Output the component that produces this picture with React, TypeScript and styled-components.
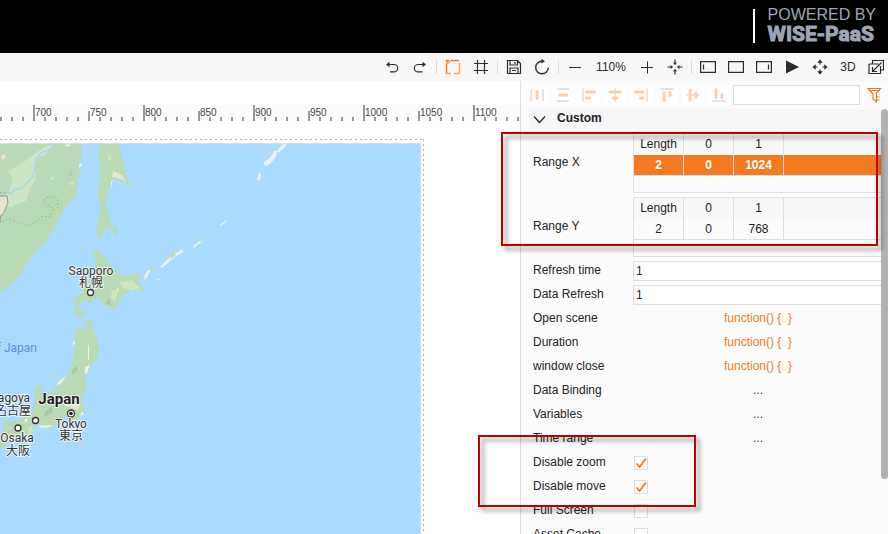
import React from "react";
import styled, { createGlobalStyle, css } from "styled-components";

const ORANGE = "#f37a20";
const LINE = "#dedede";
const INK = "#2b2b2b";

const GlobalStyle = createGlobalStyle`
  *, *::before, *::after { box-sizing: border-box; }
  body {
    margin: 0;
    background: #fff;
    color: #222;
    font: 12px/20px "Liberation Sans", Arial, sans-serif;
  }
  button, input { font: inherit; color: inherit; }
`;

const Page = styled.div`
  display: flex;
  flex-direction: column;
  height: 100vh;
  overflow: hidden;
`;

/* ---------- brand header ---------- */

const Header = styled.header`
  display: flex;
  flex: none;
  justify-content: flex-end;
  height: 53px;
  padding: 9px 12px 10px;
  background: #000;
`;

const Brand = styled.div`
  display: flex;
  flex-direction: column;
  padding-left: 13px;
  border-left: 2px solid #fff;
  color: #9fa5b5;
  white-space: nowrap;
`;

const BrandSmall = styled.span`
  font-size: 16px;
  line-height: 12px;
`;

const BrandName = styled.strong`
  font: bold 21px/26px Roboto, "Liberation Sans", sans-serif;
  -webkit-text-stroke: 1px #9fa5b5;
`;

/* ---------- toolbar ---------- */

const Toolbar = styled.div`
  display: flex;
  flex: none;
  align-items: center;
  justify-content: flex-end;
  height: 28px;
  margin-right: -2px;
  background: #f7f7f7;
`;

const ToolButton = styled.button<{ $wide?: boolean }>`
  display: flex;
  flex: none;
  align-items: center;
  justify-content: center;
  width: ${(p) => (p.$wide ? 44 : 28)}px;
  height: 28px;
  padding: 0;
  border: 0;
  background: none;
  color: ${INK};
`;

const Separator = styled.span`
  flex: none;
  width: 1px;
  height: 14px;
  margin: 0 2px;
  background: #dcdcdc;
`;

const Body = styled.main`
  display: flex;
  flex: 1;
  min-height: 0;
`;

/* ---------- canvas ---------- */

const Stage = styled.section`
  display: flex;
  flex: 1;
  flex-direction: column;
  min-width: 0;
  padding-top: 24px;
  overflow: hidden;
`;

const Ruler = styled.div`
  display: flex;
  flex: none;
  height: 16px;
  margin-left: -22px;
  overflow: hidden;
  background: #fcfcfc;
`;

const RulerCell = styled.span<{ $major: boolean }>`
  flex: none;
  width: 55px;
  padding-left: 2px;
  font-size: 10px;
  line-height: 15px;
  color: #444;
  background:
    linear-gradient(#999, #999) 0 100% / 2px ${(p) => (p.$major ? 16 : 10)}px no-repeat,
    repeating-linear-gradient(90deg, #999 0 2px, transparent 2px 11px) 0 100% / 100% 4px no-repeat;
`;

const Frame = styled.div`
  flex: 1;
  min-height: 0;
  margin: 18px 96px 0 0;
  padding: 4px 3px 0 0;
  background:
    repeating-linear-gradient(90deg, #8fbde6 0 2px, transparent 2px 5px) 0 0 / 100% 1px no-repeat,
    repeating-linear-gradient(#8fbde6 0 2px, transparent 2px 5px) 100% 0 / 1px 100% no-repeat;
`;

const MapSvg = styled.svg`
  display: block;
  width: 100%;
  height: 100%;
  border-top: 1px solid #d3dde2;
  border-right: 1px solid #d3dde2;
  background: #aadaff;
`;

const MapLabel = styled.text<{ $kind?: "country" | "sea" }>`
  font-family: Roboto, "Noto Sans CJK JP", sans-serif;
  font-size: 12px;
  fill: #333;
  stroke: rgba(255, 255, 255, 0.75);
  stroke-width: 2px;
  stroke-linejoin: round;
  paint-order: stroke;
  ${(p) => p.$kind === "country" && css`font-size: 15px; font-weight: 700; fill: #222;`}
  ${(p) => p.$kind === "sea" && css`fill: #5b8fd6; stroke: none;`}
`;

/* ---------- property panel ---------- */

const Panel = styled.aside`
  position: relative;
  display: flex;
  flex: none;
  flex-direction: column;
  width: 368px;
  border-left: 1px solid ${LINE};
  background: #fcfcfc;
`;

const AlignBar = styled.div`
  display: flex;
  flex: none;
  align-items: center;
  height: 28px;
  padding-left: 3px;
`;

const AlignButton = styled.button`
  display: flex;
  flex: none;
  align-items: center;
  justify-content: center;
  width: 22px;
  height: 20px;
  margin: 0 2px;
  padding: 0;
  border: 0;
  background: #fff;
`;

const SearchInput = styled.input`
  flex: 1;
  min-width: 0;
  height: 20px;
  margin-left: 1px;
  padding: 0 4px;
  border: 1px solid ${LINE};
  background: #fff;
  outline: none;
`;

const FilterButton = styled(ToolButton)`
  color: ${ORANGE};
`;

const Scroller = styled.div`
  display: flex;
  flex: 1;
  min-height: 0;
`;

const Content = styled.div`
  flex: 1;
  min-width: 0;
  padding-left: 8px;
  overflow: hidden;
`;

const ScrollTrack = styled.div`
  flex: none;
  width: 7px;
`;

const ScrollThumb = styled.div`
  height: 87%;
  border-radius: 4px;
  background: #b2b2b2;
`;

const GroupHeader = styled.button`
  display: flex;
  align-items: center;
  gap: 8px;
  width: 100%;
  height: 20px;
  padding: 0 0 2px 4px;
  border: 0;
  background: #f7f7f7;
  font-weight: bold;
`;

const Rows = styled.div`
  display: flex;
  flex-direction: column;
  gap: 4px;
  padding: 4px 0 0 4px;
`;

const Row = styled.div`
  display: grid;
  flex: none;
  grid-template-columns: 100px 1fr;
  align-items: center;
  min-height: 20px;
`;

const Name = styled.label`
  padding-bottom: 2px;
  line-height: 18px;
`;

const TextInput = styled.input`
  width: 100%;
  height: 20px;
  padding: 0 2px;
  border: 1px solid ${LINE};
  border-right: 0;
  background: #fff;
  outline: none;
`;

const ValueButton = styled.button<{ $accent?: boolean }>`
  justify-self: center;
  height: 20px;
  padding: 0 0 2px 2px;
  border: 0;
  background: none;
  line-height: 18px;
  white-space: pre;
  color: ${(p) => (p.$accent ? ORANGE : "#333")};
`;

const TickBox = styled.input`
  width: 14px;
  height: 14px;
  margin: 0 0 0 1px;
  appearance: none;
  border: 1px solid ${LINE};
  background: #fff;
  &:checked {
    background: #fff
      url("data:image/svg+xml,%3Csvg xmlns='http://www.w3.org/2000/svg' viewBox='0 0 12 12'%3E%3Cpath d='M1.5 6.5 4.5 10 11 1.5' fill='none' stroke='%23f37a20' stroke-width='1.8'/%3E%3C/svg%3E")
      center / 12px 12px no-repeat;
  }
`;

const TableBox = styled.div`
  height: 60px;
  border: 1px solid ${LINE};
  border-right: 0;
`;

const Table = styled.table`
  width: 100%;
  table-layout: fixed;
  border-collapse: separate;
  border-spacing: 0;
  text-align: center;
`;

const Cell = styled.td<{ $active?: boolean }>`
  width: 50px;
  height: 21px;
  padding: 0;
  border-right: 1px solid ${LINE};
  border-bottom: 1px solid ${LINE};
  line-height: 18px;
  &:last-child { width: auto; border-right: 0; }
  ${(p) => p.$active && css`background: ${ORANGE}; color: #fff; font-weight: bold;`}
`;

const HeadCell = styled.th`
  width: 50px;
  height: 21px;
  padding: 0 0 2px;
  border-right: 1px solid ${LINE};
  background: #f7f7f7;
  font-weight: normal;
  line-height: 18px;
  &:last-child { width: auto; border-right: 0; }
`;

const Callout = styled.div<{ $x: number; $y: number; $w: number; $h: number }>`
  position: absolute;
  left: ${(p) => p.$x}px;
  top: ${(p) => p.$y}px;
  width: ${(p) => p.$w}px;
  height: ${(p) => p.$h}px;
  border: 2px solid #c00000;
  filter: drop-shadow(4px 4px 2px rgba(0, 0, 0, 0.45));
  pointer-events: none;
`;

/* ---------- icons ---------- */

type IconProps = { children: React.ReactNode; w?: number };

const Icon = ({ children, w = 1.2 }: IconProps) => (
  <svg width="16" height="16" viewBox="0 0 16 16" fill="none" stroke="currentColor" strokeWidth={w} aria-hidden="true">
    {children}
  </svg>
);

const icons = {
  undo: (
    <Icon>
      <path d="M4 5.500h6a3.700 3.700 0 0 1 0 7.400H6" />
      <path fill="currentColor" stroke="none" d="M2 5.500 5.500 2.800v5.400z" />
    </Icon>
  ),
  redo: (
    <Icon>
      <path d="M12 5.500H6a3.700 3.700 0 0 0 0 7.400h4.500" />
      <path fill="currentColor" stroke="none" d="M14 5.500 10.500 2.800v5.400z" />
    </Icon>
  ),
  frame: (
    <Icon w={1.4}>
      <path stroke={ORANGE} d="M1.500 4.500V15M1 1.500h3M5.500 1.500h8.500M1.500 1v2.500M2 4h1.500M4.500 2v1.500" />
      <path stroke="#f7a469" d="M14.500 4v10.500H9M1.500 14.500h4.500" />
    </Icon>
  ),
  grid: <Icon><path d="M4.500 1v14M11.500 1v14M1 4.500h14M1 11.500h14" /></Icon>,
  save: <Icon><path d="M1.500 1.500h10l3 3v10h-13zM4 1.500v4.500h7.500V1.500M9 3v2M4 14.500V9h8v5.500M6 11.500h4" /></Icon>,
  refresh: (
    <Icon w={1.4}>
      <path d="M14.300 8.500a6.300 6.300 0 1 1-6.300-6.300" />
      <path fill="currentColor" stroke="none" d="M7.500 0 11 2.200 7.500 4.600z" />
    </Icon>
  ),
  minus: <Icon w={1}><path d="M2 8.500h12" /></Icon>,
  plus: <Icon w={1}><path d="M2 8.500h12M8.500 2.500v12" /></Icon>,
  focus: (
    <Icon w={1.2}>
      <path d="M8 .5v3M8 12.500v3M.5 8h3M12.500 8h3" />
      <path fill="currentColor" stroke="none" d="M6 3.500h4L8 6.200zM6 12.500h4L8 9.800zM3.500 6v4l2.700-2zM12.500 6v4l-2.700-2z" />
    </Icon>
  ),
  panelLeft: <Icon w={1.2}><path d="M.6 2.600h14.800v10.800H.6zM3.500 5.500v5" /></Icon>,
  panelMid: <Icon w={1.2}><path d="M.6 2.600h14.800v10.800H.6z" /></Icon>,
  panelRight: <Icon w={1.2}><path d="M.6 2.600h14.800v10.800H.6zM12.500 5.500v5" /></Icon>,
  play: <Icon><path fill="currentColor" stroke="none" d="M2 1.500v13L15 8z" /></Icon>,
  move: (
    <Icon w={1.2}>
      <path d="M8 3v2.500M8 10.500V13M3 8h2.500M10.500 8H13" />
      <path fill="currentColor" stroke="none" d="M8 .5l2.800 3.200H5.200zM8 15.500l2.800-3.200H5.200zM.5 8l3.200-2.800v5.600zM15.500 8l-3.200-2.800v5.600z" />
    </Icon>
  ),
  swap: (
    <Icon w={1.2}>
      <path d="M4.500 5V1.500h11V11h-3M1 5h9.500M1 5v9.500h11.500V7M13.500 3.500 5 12M4.500 8v4.500H9" />
    </Icon>
  ),
  filter: (
    <Icon w={1.2}>
      <path d="M2 1.500h12.500L10.500 6v9L7 12V7zM3.500 3.500h9.500M10.500 10h3M10.500 13h3" />
    </Icon>
  ),
  chevron: <Icon w={1.2}><path d="M1 6.500 6.500 12.500 12 6.500" /></Icon>,
};

const PALE = "#fbcfae";
const GREY = "#dadada";

const alignShapes: { label: string; grey: string; pale: string }[] = [
  { label: "Distribute horizontally", grey: "M2 2v12M14 2v12", pale: "M8 4.500v7" },
  { label: "Distribute vertically", grey: "M2 2h12M2 14h12", pale: "M4.500 8h7" },
  { label: "Align left", grey: "M2 1.500v13", pale: "M5.500 5h8M5.500 11h3" },
  { label: "Align center", grey: "M8 1.500v13", pale: "M3 5h10M6 11h4" },
  { label: "Align right", grey: "M14 1.500v13", pale: "M2.500 5h8M7.500 11h3" },
  { label: "Align top", grey: "M1.500 2h13", pale: "M5 5.500v8M11 5.500v3" },
  { label: "Align middle", grey: "M1.500 8h13", pale: "M5 3v10M11 6v4" },
  { label: "Align bottom", grey: "M1.500 14h13", pale: "M5 2.500v8M11 7.500v3" },
];

const tools: { label: string; icon?: React.ReactNode; text?: string; sep?: boolean; wide?: boolean }[] = [
  { label: "Undo", icon: icons.undo },
  { label: "Redo", icon: icons.redo, sep: true },
  { label: "Frame", icon: icons.frame },
  { label: "Grid", icon: icons.grid, sep: true },
  { label: "Save", icon: icons.save },
  { label: "Refresh", icon: icons.refresh, sep: true },
  { label: "Zoom out", icon: icons.minus },
  { label: "Zoom level", text: "110%", wide: true },
  { label: "Zoom in", icon: icons.plus },
  { label: "Fit", icon: icons.focus, sep: true },
  { label: "Left panel", icon: icons.panelLeft },
  { label: "Bottom panel", icon: icons.panelMid },
  { label: "Right panel", icon: icons.panelRight },
  { label: "Play", icon: icons.play },
  { label: "Move", icon: icons.move },
  { label: "3D view", text: "3D" },
  { label: "Switch", icon: icons.swap },
];

const marks = [650, 700, 750, 800, 850, 900, 950, 1000, 1050, 1100];

/* ---------- parts ---------- */

const JapanMap = () => (
  <MapSvg viewBox="0 144 420 390" preserveAspectRatio="xMinYMin slice" role="img" aria-label="Map of Japan">
    <path stroke="#b4dcfa" d="M293.500 144v390M0 327.500h420" />
    <g fill="#b8dab6">
      <path d="M0 144H82L81 156 80 167 78 182 77 195 70 203 62 213 57 223 52 232 44 244 33 255 27 264 20 275 13 284 6 288 0 292z" />
      <path d="M101 144h18l2 11 4 15 4 12 4 7-8-7-10-3-5 6-3 12-1 10 4 10 2 12 4-4 2 5-2 8-3-6-5-4-5 3-3 11-4-8 1-9 4-18-3-13 2-20-1-20z" />
      <path d="M94 251l4-1 9 8 6 10 7 6 8 2 12-4-3 8 6 8-4 2-9 1-8 6-7 13-10-5-10-7-5 5-7-2-4 3 0 5 8 4-8 5-5-3 2-7-4-7 4-5 6-2-1-10 8-4 5-4 2-13-3-8z" />
      <path d="M78 324l3 6 5-3-2-5 3-2 5 1 0 8 5 9 2 7 0 7-3 8-5 8-5 7 1 12-4 10-1 7 4 8-6 4-4 6-6-1-4-6-5 8-6 1-4 5-10-4-6 0-3 6-7 6-9 0-6 3-7 9V421l14 1 10-8 6-6 2-14-2-3 3-5 7-2 1 4-4 3 2 4 10-3 5-6 9-9 6-15 2-10-1-8 3-10 2-10z" />
      <path d="M52 375l3-2 1 2-3 3zM0 440h8l-2 5-6 4z" />
    </g>
    <g fill="#cbe6c1">
      <path d="M46 146l8-1-8 9-8 4-3 8 1 12-7 13-3 10-8 3-6 3-8 0-4-4V200l9-8 4-14-5-7 8-4 12-8 10-8zM69 183l5-2 0 4-4 0zM108 154l4 4-4 4zM50 178l6-3-4 6z" />
      <path d="M120 282l12-2 8 8-7 3-10-3zM112 290l6 2-3 10-4-4zM28 428l4-3 1 7-4 3z" />
    </g>
    <path fill="#a9c8aa" d="M68 175l5-4-2 5zM108 299l2 0 1 6-6-1zM72 370l4-4 2 4-6 5zM45 412l7-6 1 6-9 6z" />
    <g fill="#e4e6cd">
      <path d="M0 196h7l1 8-4 9-4 5zM1 155l4-1 1 4-4 2zM113 171l9 4 4 6-9-3-5-1zM62 401l18 3-2 6-6-2-8-2z" />
    </g>
    <g fill="#eef0ea">
      <path d="M64 145l7-1-3 3zM79 165l2-2 1 2-3 3zM111 182l2-3-2 9zM116 290l3-2-1 4zM88 345l1 0 0 15-1 0zM85 367l5-2-3 8-2 1zM58 382l8-6-5 8-3 1zM73 341l2 1-2 6zM38 426l14-1-1 2-9 1zM24 421l3-4 0 5zM82 411l2 3-4 2z" />
      <path d="M264 162l6-4 4-7 3 0-1 6-4 5-5 4-3-1zM277 151l4-5 3-3 3 0-2 4-7 6zM257 180l2-7 2 0-1 5-1 3zM220 225l6-5 1 1-6 5zM193 246l8-6 2 1-8 6-2 1zM160 267l10-10 12-8 2 3-8 4-14 12zM142 279l6-9 3 0-5 9zM157 279l3 0-1 2z" />
    </g>
    <path fill="#bddcb2" d="M199 240l6-4-1 3-3 3zM170 256l4-4 2 3-5 4zM149 269l6-1-4 4zM140 273l5 4-2 3zM140 288l5 1-4 3z" />
    <path fill="none" stroke="#a6d6f8" strokeWidth="1.600" d="M55 145l-6 5-8 3-5 6-1 8-2 10-6 6-5 5-8 2-4 5" />
    <path fill="none" stroke="#9dbb9f" strokeDasharray="2 2" d="M0 193l8-1 4 2M2 222l6-3 8 3 12 4 10-6 5-4 7 1 4-8-10-6 1-5 8-2 4 3 1 8 4 6" />
    <path fill="none" stroke="#8f9b8b" d="M0 196h7l1 7-4 9-4 6" />
    <path fill="none" stroke="#96a99c" d="M0 223l1-8" />
    <g fill="#fff" stroke="#333" strokeWidth="1.300">
      <circle cx="90.500" cy="292.500" r="3" />
      <circle cx="35.500" cy="420.500" r="3" />
      <circle cx="18" cy="428" r="3" />
      <circle cx="71" cy="413.500" r="3.500" />
    </g>
    <circle cx="71" cy="413.500" r="1.800" fill="#222" />
    <MapLabel x="91" y="275" textAnchor="middle">Sapporo</MapLabel>
    <MapLabel x="91" y="287" textAnchor="middle">札幌</MapLabel>
    <MapLabel x="37" y="352" textAnchor="end" $kind="sea">Sea of Japan</MapLabel>
    <MapLabel x="59" y="404" textAnchor="middle" $kind="country">Japan</MapLabel>
    <MapLabel x="30" y="402" textAnchor="end">Nagoya</MapLabel>
    <MapLabel x="31" y="415" textAnchor="end">名古屋</MapLabel>
    <MapLabel x="71" y="428" textAnchor="middle">Tokyo</MapLabel>
    <MapLabel x="71" y="440" textAnchor="middle">東京</MapLabel>
    <MapLabel x="17" y="442" textAnchor="middle">Osaka</MapLabel>
    <MapLabel x="18" y="455" textAnchor="middle">大阪</MapLabel>
  </MapSvg>
);

const RangeRow = ({ name, values, active }: { name: string; values: string[]; active?: boolean }) => (
  <Row>
    <Name as="span">{name}</Name>
    <TableBox>
      <Table aria-label={name}>
        <thead>
          <tr>
            <HeadCell>Length</HeadCell>
            <HeadCell>0</HeadCell>
            <HeadCell>1</HeadCell>
            <HeadCell aria-hidden="true" />
          </tr>
        </thead>
        <tbody>
          <tr>
            {values.map((v, i) => <Cell key={i} $active={active}>{v}</Cell>)}
            <Cell $active={active} />
          </tr>
        </tbody>
      </Table>
    </TableBox>
  </Row>
);

const InputRow = ({ name, id }: { name: string; id: string }) => (
  <Row>
    <Name htmlFor={id}>{name}</Name>
    <TextInput id={id} type="text" defaultValue="1" />
  </Row>
);

const ActionRow = ({ name, id, value }: { name: string; id: string; value?: string }) => (
  <Row>
    <Name htmlFor={id}>{name}</Name>
    <ValueButton id={id} type="button" $accent={!!value}>{value ?? "..."}</ValueButton>
  </Row>
);

const CheckRow = ({ name, id, on = false }: { name: string; id: string; on?: boolean }) => (
  <Row>
    <Name htmlFor={id}>{name}</Name>
    <TickBox id={id} type="checkbox" defaultChecked={on} />
  </Row>
);

export default function App() {
  return (
    <Page>
      <GlobalStyle />
      <Header>
        <Brand>
          <BrandSmall>POWERED BY</BrandSmall>
          <BrandName>WISE-PaaS</BrandName>
        </Brand>
      </Header>

      <Toolbar role="toolbar" aria-label="Editor">
        {tools.map((t) => (
          <React.Fragment key={t.label}>
            <ToolButton type="button" aria-label={t.label} $wide={t.wide}>{t.icon ?? t.text}</ToolButton>
            {t.sep && <Separator />}
          </React.Fragment>
        ))}
      </Toolbar>

      <Body>
        <Stage>
          <Ruler>
            {marks.map((m) => <RulerCell key={m} $major={m % 100 === 0}>{m}</RulerCell>)}
          </Ruler>
          <Frame><JapanMap /></Frame>
        </Stage>

        <Panel>
          <AlignBar>
            {alignShapes.map((a) => (
              <AlignButton key={a.label} type="button" aria-label={a.label}>
                <svg width="16" height="16" viewBox="0 0 16 16" fill="none" aria-hidden="true">
                  <path d={a.grey} stroke={GREY} strokeWidth="1.500" />
                  <path d={a.pale} stroke={PALE} strokeWidth="3" strokeLinecap="round" />
                </svg>
              </AlignButton>
            ))}
            <SearchInput type="text" aria-label="Search properties" />
            <FilterButton type="button" aria-label="Filter">{icons.filter}</FilterButton>
          </AlignBar>

          <Scroller>
            <Content>
              <GroupHeader type="button" aria-expanded="true">{icons.chevron}Custom</GroupHeader>
              <Rows>
                <RangeRow name="Range X" values={["2", "0", "1024"]} active />
                <RangeRow name="Range Y" values={["2", "0", "768"]} />
                <InputRow name="Refresh time" id="refresh-time" />
                <InputRow name="Data Refresh" id="data-refresh" />
                <ActionRow name="Open scene" id="open-scene" value="function() {  }" />
                <ActionRow name="Duration" id="duration" value="function() {  }" />
                <ActionRow name="window close" id="window-close" value="function() {  }" />
                <ActionRow name="Data Binding" id="data-binding" />
                <ActionRow name="Variables" id="variables" />
                <ActionRow name="Time range" id="time-range" />
                <CheckRow name="Disable zoom" id="disable-zoom" on />
                <CheckRow name="Disable move" id="disable-move" on />
                <CheckRow name="Full Screen" id="full-screen" />
                <CheckRow name="Asset Cache" id="asset-cache" />
              </Rows>
            </Content>
            <ScrollTrack><ScrollThumb /></ScrollTrack>
          </Scroller>

          <Callout $x={-20} $y={51} $w={377} $h={114} />
          <Callout $x={-43} $y={354} $w={218} $h={72} />
        </Panel>
      </Body>
    </Page>
  );
}
